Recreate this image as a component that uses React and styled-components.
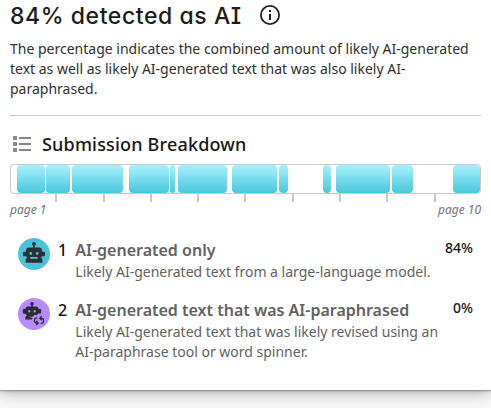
import React from "react";
import styled, { createGlobalStyle } from "styled-components";

const GlobalStyle = createGlobalStyle`
  * { box-sizing: border-box; }
  body {
    margin: 0;
    font-family: "Noto Sans", sans-serif;
  }
`;

const Page = styled.div`
  height: 408px;
  overflow: hidden;
  background: #fafafa;
`;

const Card = styled.main`
  width: 491px;
  height: 390px;
  padding: 0 10px;
  background: #fff;
  box-shadow: 0 1px 1px rgba(0, 0, 0, 0.2), 0 2px 3px rgba(0, 0, 0, 0.12), 0 4px 16px rgba(0, 0, 0, 0.25);
`;

const Header = styled.header`
  display: flex;
  align-items: center;
  gap: 18px;
  height: 30px;
`;

const Title = styled.h1`
  margin: 0;
  padding-top: 1px;
  width: 232px;
  font: 450 23px/30px Inter, "Noto Sans", sans-serif;
  font-feature-settings: "cv11", "cv08";
  letter-spacing: 0.57px;
  white-space: nowrap;
  color: #1c1c1c;
`;

const Intro = styled.p`
  margin: 9px 0 16px;
  font-size: 14px;
  line-height: 20px;
  color: #303030;
  white-space: nowrap;
`;

const Breakdown = styled.section`
  border-top: 1px solid #c9c9c9;
`;

const SectionHeading = styled.div`
  display: flex;
  align-items: center;
  height: 48px;
  padding: 8px 0 0 3px;
  gap: 11px;
`;

const SectionTitle = styled.h2`
  margin: 0;
  font-size: 18px;
  line-height: 24px;
  font-weight: 550;
  letter-spacing: 0.18px;
  color: #151515;
`;

const Track = styled.div`
  display: flex;
  width: 471px;
  height: 30px;
  border: 1px solid #c9c9c9;
  border-radius: 4px;
`;

const Segment = styled.div`
  flex: none;
  width: ${({ $width }) => $width}px;
  margin-left: ${({ $gap }) => $gap}px;
  border-radius: 4px;
  background: linear-gradient(#a9f1fd, #4ac6dc);
`;

const Ticks = styled.div`
  display: flex;
  height: 8px;
`;

const Tick = styled.i`
  flex: none;
  width: 47.3px;
  border-right: 2px solid #c9c9c9;
`;

const PageLabels = styled.div`
  display: flex;
  justify-content: space-between;
  width: 471px;
  font-size: 12px;
  line-height: 16px;
  font-style: italic;
  color: #747474;
`;

const Legend = styled.ul`
  display: grid;
  row-gap: 16px;
  margin: 20px 0 0;
  padding: 0;
  list-style: none;
`;

const LegendItem = styled.li`
  display: grid;
  grid-template-columns: 40px 17.3px 1fr auto;
  width: 463px;
  padding-left: 8px;
`;

const Badge = styled.span`
  display: block;
  width: 32px;
  height: 32px;
  border-radius: 50%;
  background: ${({ $color }) => $color};
`;

const Index = styled.span`
  font-size: 16px;
  font-weight: 500;
  line-height: 24px;
  color: #111;
`;

const Description = styled.div`
  font-size: 14px;
  line-height: 20px;
  color: #626262;
  white-space: nowrap;
`;

const ItemTitle = styled.h3`
  margin: 0;
  font-size: 16px;
  line-height: 24px;
  font-weight: 600;
`;

const Percent = styled.span`
  font-size: 14px;
  line-height: 20px;
  font-weight: 500;
  color: #151515;
`;

const segments = [
  [6, 28], [1, 24], [2, 51], [6, 40], [1, 5], [3, 49],
  [5, 45], [2, 9], [35, 8], [5, 54], [2, 21], [40, 27],
];

const InfoIcon = () => (
  <svg width="20" height="20" viewBox="0 0 20 20">
    <circle cx="10" cy="10" r="9.1" fill="none" stroke="#202020" strokeWidth="1.8" />
    <path d="M9 5h2v2H9zM9 9h2v6H9z" fill="#202020" />
  </svg>
);

const ListIcon = () => (
  <svg width="18" height="16" viewBox="0 0 18 16" fill="#888">
    <path d="M0 0h4v4H0zM0 6h4v4H0zM0 12h4v4H0zM6 1h12v2H6zM6 7h12v2H6zM6 13h12v2H6z" />
  </svg>
);

const RobotIcon = () => (
  <svg width="32" height="32" viewBox="0 0 32 32">
    <path d="M15.2 7h1.6v4h-1.6z" fill="#2c3034" />
    <circle cx="16" cy="5.9" r="1.9" fill="#2c3034" />
    <path fillRule="evenodd" fill="#2c3034" d="M11 9.5h10q3 0 3 3v1.3h2q1 0 1 1v2.4q0 1-1 1h-2l-1.5 2H23q1.4 0 1.4 1.4v3.2H7.6v-3.2q0-1.4 1.4-1.4h.5l-1.5-2H6q-1 0-1-1v-2.4q0-1 1-1h2v-1.3q0-3 3-3zM12.8 14a1.4 1.4 0 1 0 0 2.8 1.4 1.4 0 0 0 0-2.8zm6.4 0a1.4 1.4 0 1 0 0 2.8 1.4 1.4 0 0 0 0-2.8zM12.3 19v1.7h7.4V19z" />
  </svg>
);

const ParaphraseIcon = () => (
  <svg width="32" height="32" viewBox="0 0 32 32">
    <circle cx="14" cy="5.8" r="1.8" fill="#292d31" />
    <path d="M13.3 7h1.4v3h-1.4z" fill="#292d31" />
    <path fillRule="evenodd" fill="#292d31" d="M10.3 8.5h7.4q2.8 0 2.8 2.5h1.7q1 0 1 1v2.5q0 1-1 1h-1.7L19 17h-2.5l-1.8 1.8h-4.2l4 1.2-.6 1.5H7.3v-2q0-1.3 1.5-1.8l-1.3-2H5.8q-1 0-1-1V12q0-1 1-1h1.7q0-2.5 2.8-2.5zM11.3 12a1.2 1.2 0 1 0 0 2.4 1.2 1.2 0 0 0 0-2.4zm5.4 0a1.2 1.2 0 1 0 0 2.4 1.2 1.2 0 0 0 0-2.4z" />
    <path d="M19.4 19.8h-.6q-2.3 0-2.3 2.3v.6q0 2.3 2.3 2.3h.8M18.3 23l2 2-2 2M22.6 25.4h.6q2.3 0 2.3-2.3v-.6q0-2.3-2.3-2.3h-.8M23.7 18.2l-2 2 2 2" fill="none" stroke="#292d31" strokeWidth="1.25" />
  </svg>
);

export default function App() {
  return (
    <Page>
      <GlobalStyle />
      <Card>
        <Header><Title>84% detected as AI</Title><InfoIcon /></Header>
        <Intro>
          The percentage indicates the combined amount of likely AI-generated<br />
          text as well as likely AI-generated text that was also likely AI-<br />
          paraphrased.
        </Intro>
        <Breakdown>
          <SectionHeading><ListIcon /><SectionTitle>Submission Breakdown</SectionTitle></SectionHeading>
          <Track>
            {segments.map(([gap, width], i) => <Segment key={i} $gap={gap} $width={width} />)}
          </Track>
          <Ticks>{Array.from({ length: 9 }, (_, i) => <Tick key={i} />)}</Ticks>
          <PageLabels><span>page 1</span><span>page 10</span></PageLabels>
          <Legend>
            <LegendItem>
              <Badge $color="#4cc3d6"><RobotIcon /></Badge>
              <Index>1</Index>
              <Description>
                <ItemTitle>AI-generated only</ItemTitle>
                Likely AI-generated text from a large-language model.
              </Description>
              <Percent>84%</Percent>
            </LegendItem>
            <LegendItem>
              <Badge $color="#b78cff"><ParaphraseIcon /></Badge>
              <Index>2</Index>
              <Description>
                <ItemTitle>AI-generated text that was AI-paraphrased</ItemTitle>
                Likely AI-generated text that was likely revised using an<br />
                AI-paraphrase tool or word spinner.
              </Description>
              <Percent>0%</Percent>
            </LegendItem>
          </Legend>
        </Breakdown>
      </Card>
    </Page>
  );
}
